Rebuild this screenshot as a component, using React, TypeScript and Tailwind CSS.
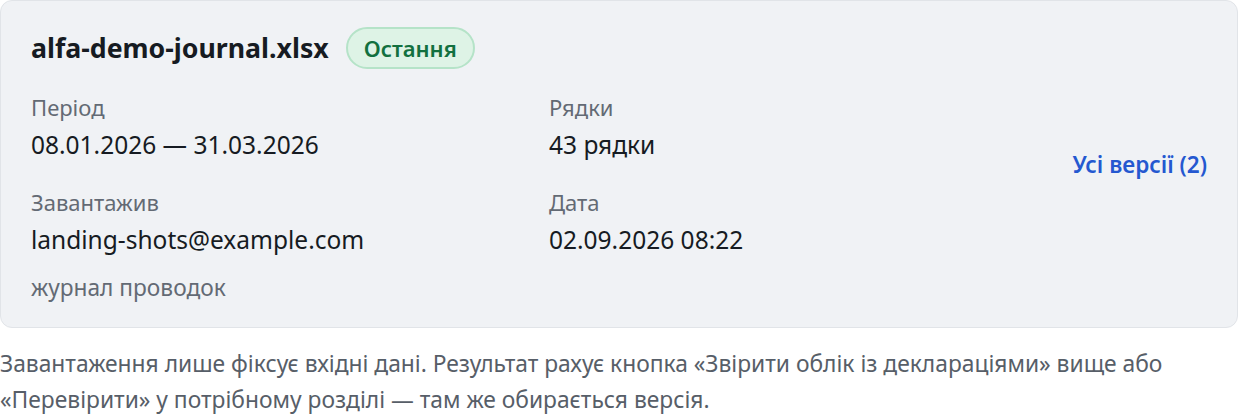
export default function App() {
  const font = { fontFamily: '"Noto Sans", "Open Sans", sans-serif' };
  return (
    <div className="w-[1238px] bg-white" style={font}>
      <div className="flex items-center rounded-xl border border-[#e1e4e8] bg-[#f0f2f5] pl-[30px] pr-[30px] pt-[26px] pb-[25px]">
        <div className="flex-1">
          <div className="flex items-center gap-[17px]">
            <h2 className="text-[26.7px] font-bold leading-[36px] text-[#161b22]">alfa-demo-journal.xlsx</h2>
            <span className="rounded-full border-2 border-[#b5e3c8] bg-[#def3e6] px-[16px] py-[3px] text-[22px] font-semibold leading-[32px] text-[#12703f]">
              Остання
            </span>
          </div>
          <div className="mt-[24px] grid grid-cols-[518px_1fr] gap-y-[26px]">
            <div>
              <div className="text-[22px] leading-[28px] text-[#636a74]">Період</div>
              <div className="mt-[7px] text-[24.5px] leading-[34px] text-[#161b22]">08.01.2026 — 31.03.2026</div>
            </div>
            <div>
              <div className="text-[22px] leading-[28px] text-[#636a74]">Рядки</div>
              <div className="mt-[7px] text-[24.5px] leading-[34px] text-[#161b22]">43 рядки</div>
            </div>
            <div>
              <div className="text-[22px] leading-[28px] text-[#636a74]">Завантажив</div>
              <div className="mt-[7px] text-[24.5px] leading-[34px] text-[#161b22]">landing-shots@example.com</div>
            </div>
            <div>
              <div className="text-[22px] leading-[28px] text-[#636a74]">Дата</div>
              <div className="mt-[7px] text-[24.5px] leading-[34px] text-[#161b22]">02.09.2026 08:22</div>
            </div>
          </div>
          <div className="mt-[17px] text-[22.7px] leading-[28px] text-[#636a74]">журнал проводок</div>
        </div>
        <a href="#" className="text-[22.5px] font-semibold text-[#2458d0]">Усі версії (2)</a>
      </div>
      <p className="mt-[18px] text-[22.8px] leading-[36px] text-[#575e68]">
        Завантаження лише фіксує вхідні дані. Результат рахує кнопка «Звірити облік із деклараціями» вище або «Перевірити» у потрібному розділі — там же обирається версія.
      </p>
    </div>
  );
}
